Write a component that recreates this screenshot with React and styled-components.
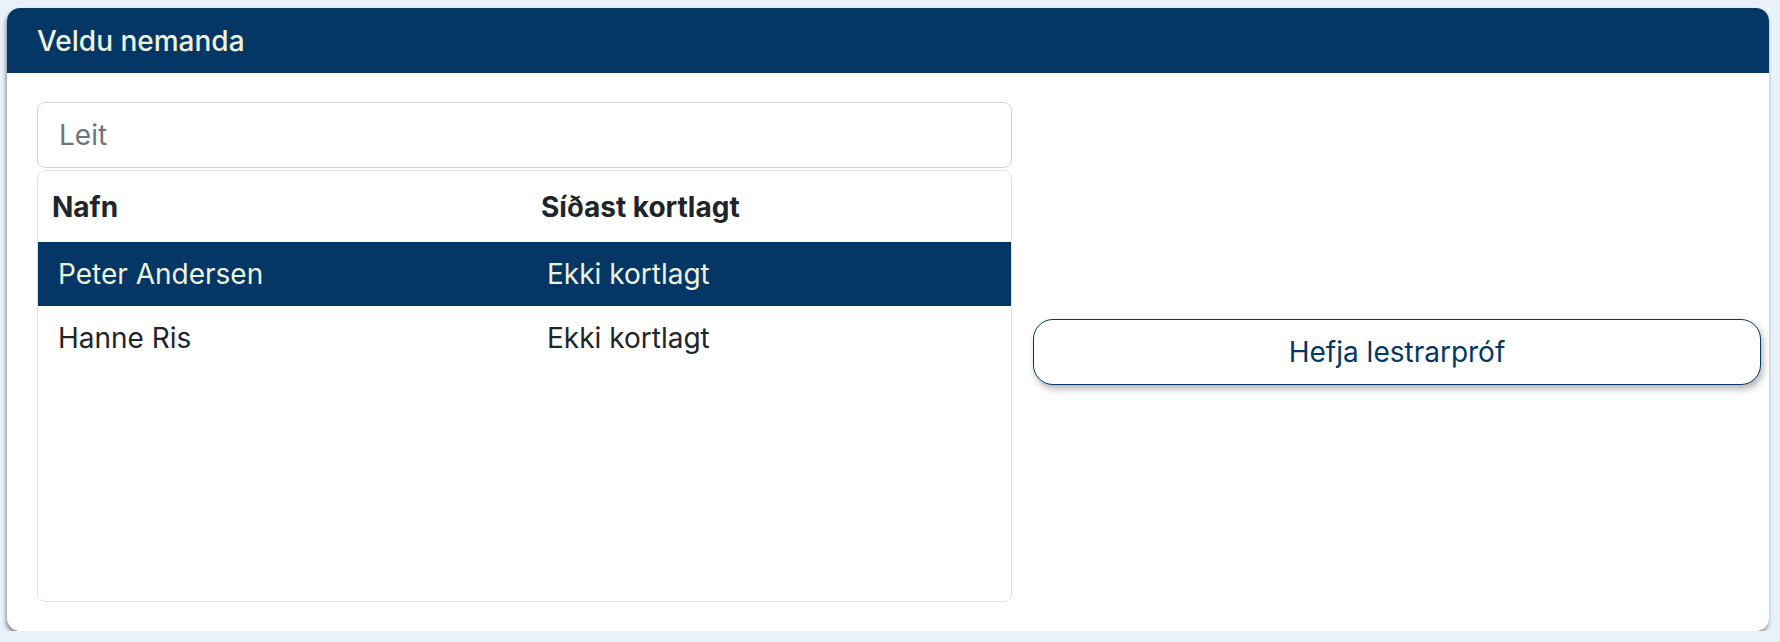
import styled, { createGlobalStyle } from "styled-components";

const GlobalStyle = createGlobalStyle`
  body {
    margin: 0;
    background-color: #e9f2fa;
    font-family: "Inter", "Noto Sans", sans-serif;
    color: #212529;
  }
  #root {
    padding: 8px 11px 0 7px;
  }
`;

const Card = styled.section`
  display: flex;
  flex-direction: column;
  height: 623px;
  background-color: #ffffff;
  border-radius: 13px;
  overflow: hidden;
  box-shadow: -1px 3px 4px rgba(0, 0, 0, 0.45);
`;

const CardHeader = styled.header`
  display: flex;
  align-items: center;
  height: 65px;
  padding: 0 30px;
  background-color: #043666;
  color: #eef3df;
  font-size: 28px;
  font-weight: 500;
`;

const CardBody = styled.div`
  flex: 1;
  display: grid;
  grid-template-columns: 975px 1fr;
  column-gap: 21px;
  padding: 29px 8px 29px 30px;
`;

const LeftColumn = styled.div`
  display: flex;
  flex-direction: column;
  gap: 2px;
`;

const SearchInput = styled.input`
  box-sizing: border-box;
  height: 66px;
  width: 100%;
  padding: 0 21px;
  border: 1px solid #ced4da;
  border-radius: 8px;
  font-family: inherit;
  font-size: 28px;
  color: #212529;
  outline: none;

  &::placeholder {
    color: #6c757d;
  }
`;

const TableBox = styled.div`
  flex: 1;
  border: 1px solid #dee2e6;
  border-radius: 8px;
  overflow: hidden;
`;

const Row = styled.div`
  display: grid;
  grid-template-columns: 489px 1fr;
  align-items: center;
  height: ${(p) => (p.$head ? "71px" : "64px")};
  padding-left: ${(p) => (p.$head ? "14px" : "20px")};
  background-color: ${(p) => (p.$selected ? "#043666" : "transparent")};
  color: ${(p) => (p.$selected ? "#eef3df" : "#212529")};
  font-size: 28px;
  font-weight: ${(p) => (p.$head ? 700 : 400)};
`;

const ActionColumn = styled.div`
  display: flex;
  align-items: center;
`;

const StartButton = styled.button`
  width: 100%;
  height: 66px;
  background-color: #ffffff;
  border: 1px solid #043666;
  border-radius: 20px;
  box-shadow: 2px 4px 7px rgba(0, 0, 0, 0.3);
  color: #043666;
  font-family: inherit;
  font-size: 28px;
  cursor: pointer;
`;

const students = [
  { name: "Peter Andersen", mapped: "Ekki kortlagt", selected: true },
  { name: "Hanne Ris", mapped: "Ekki kortlagt", selected: false },
];

export default function App() {
  return (
    <>
      <GlobalStyle />
      <Card>
        <CardHeader>Veldu nemanda</CardHeader>
        <CardBody>
          <LeftColumn>
            <SearchInput placeholder="Leit" />
            <TableBox>
              <Row $head>
                <span>Nafn</span>
                <span>Síðast kortlagt</span>
              </Row>
              {students.map((s) => (
                <Row key={s.name} $selected={s.selected}>
                  <span>{s.name}</span>
                  <span>{s.mapped}</span>
                </Row>
              ))}
            </TableBox>
          </LeftColumn>
          <ActionColumn>
            <StartButton>Hefja lestrarpróf</StartButton>
          </ActionColumn>
        </CardBody>
      </Card>
    </>
  );
}
